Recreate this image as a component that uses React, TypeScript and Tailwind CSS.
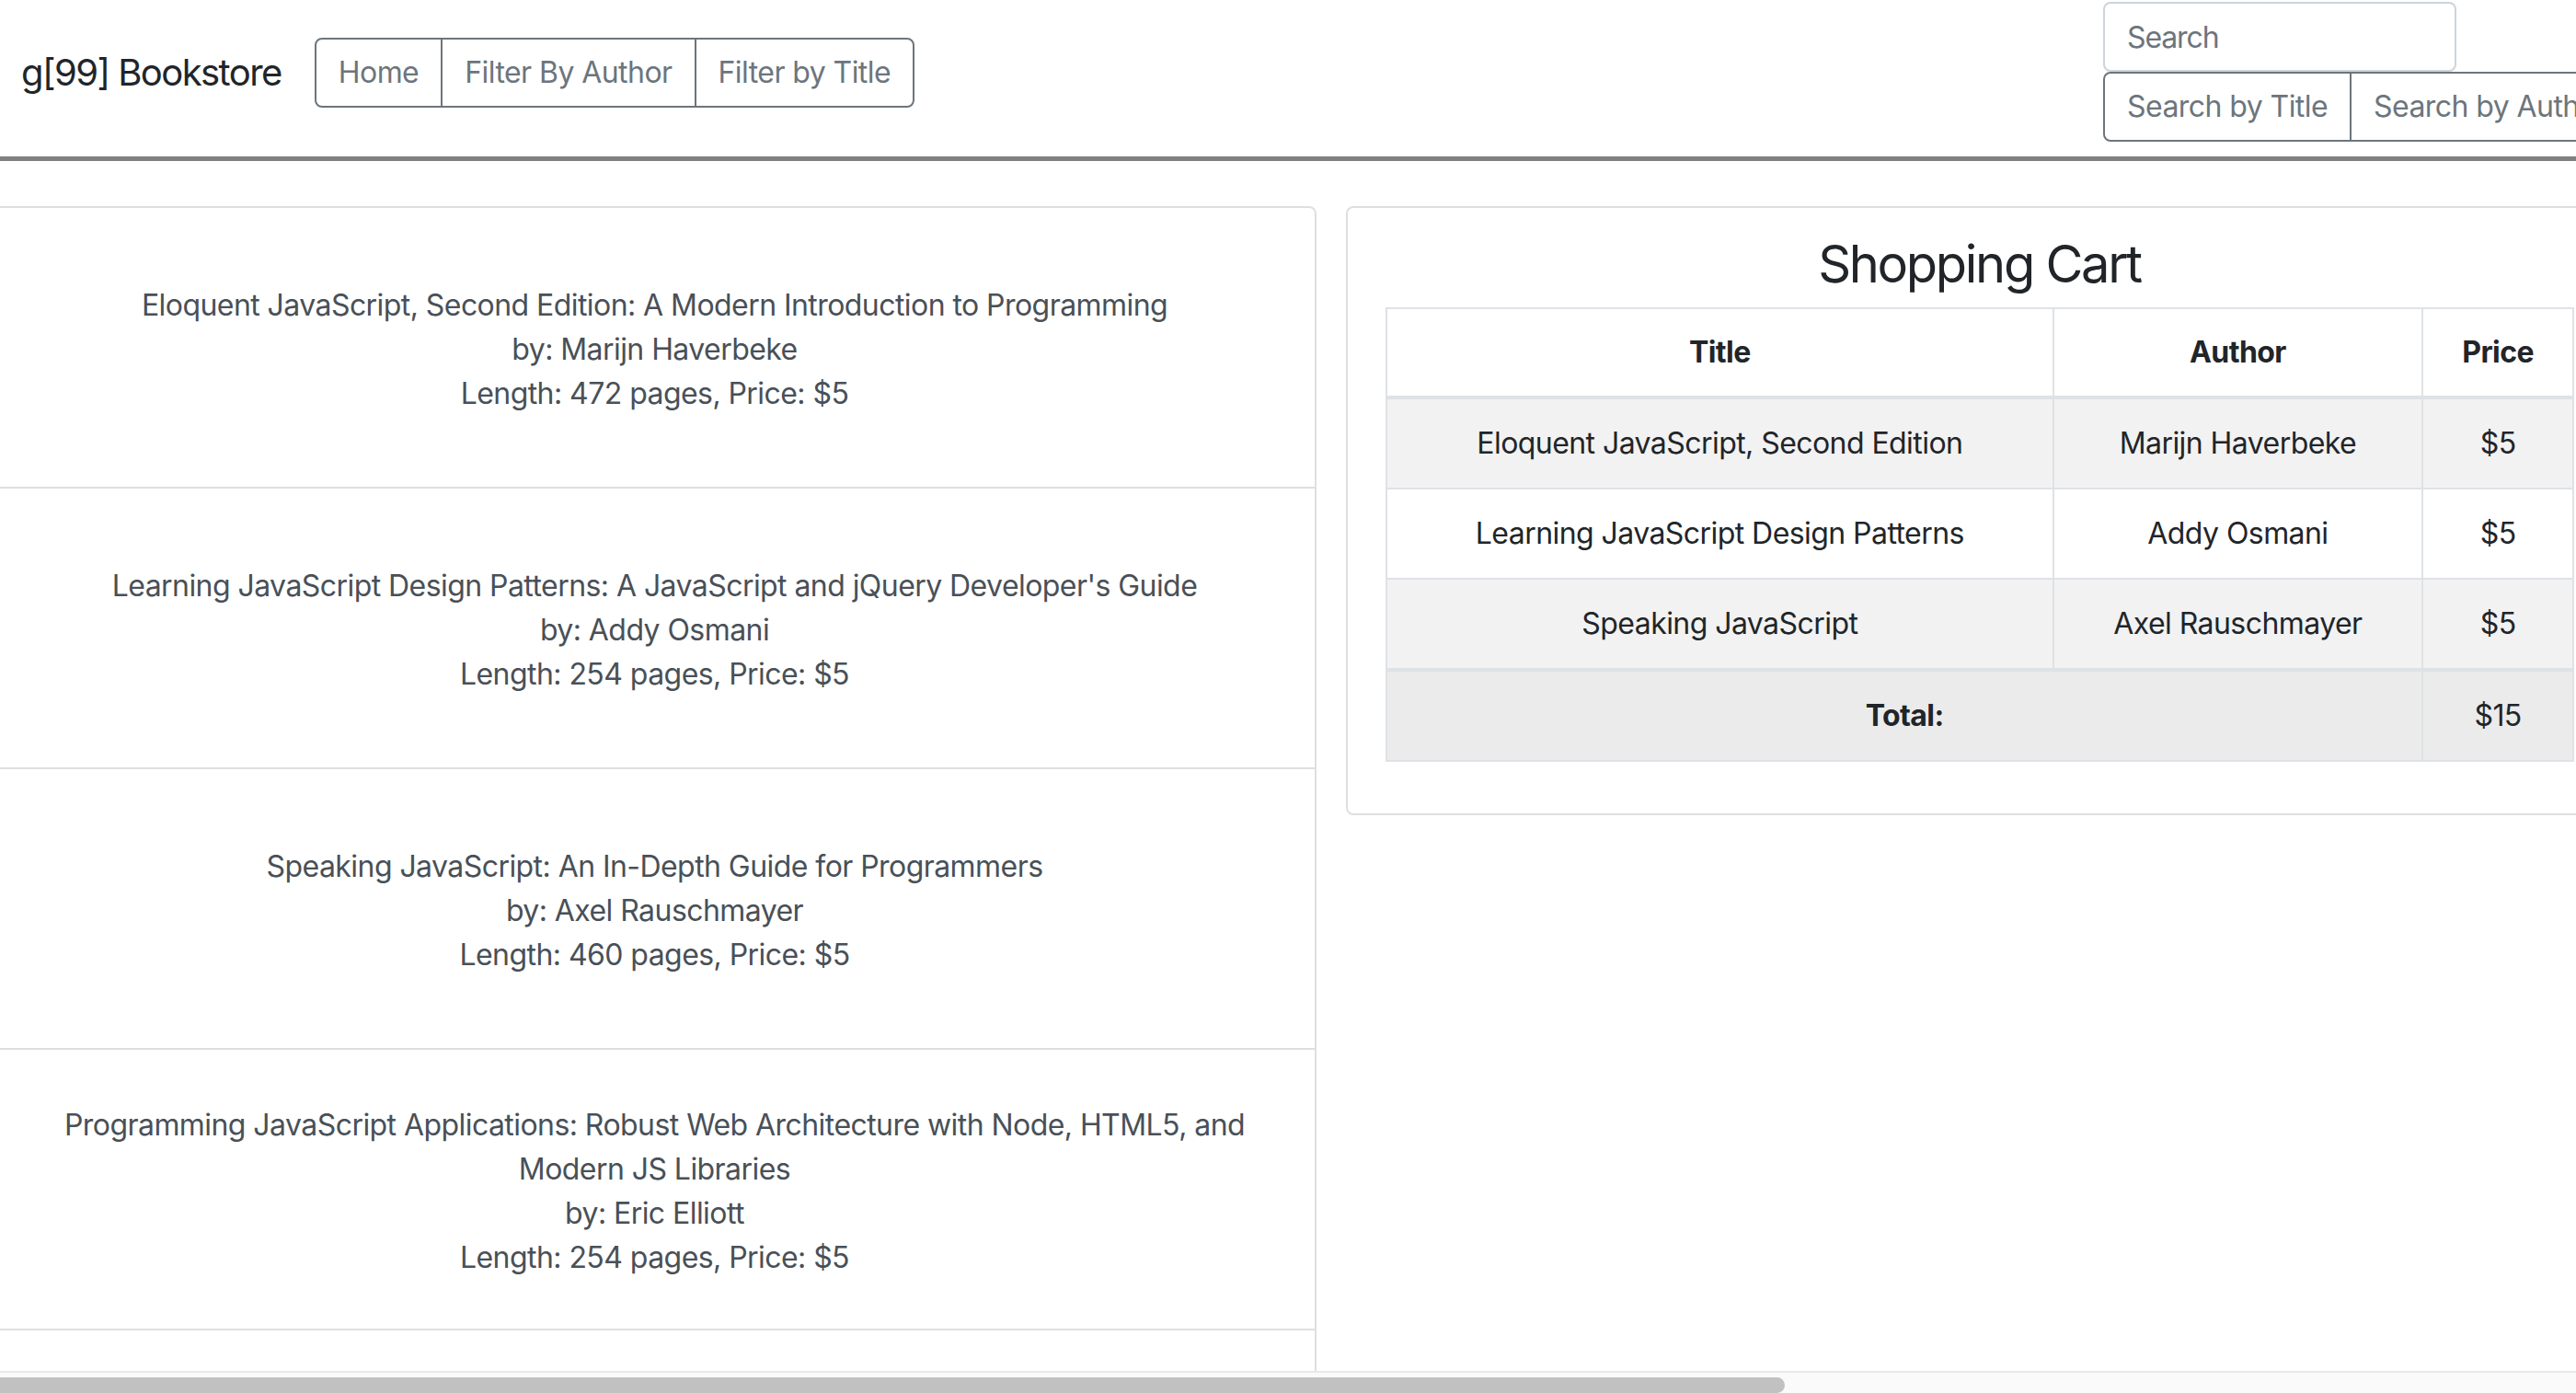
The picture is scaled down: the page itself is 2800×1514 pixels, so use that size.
import React from 'react'

const books = [
  {
    title: 'Eloquent JavaScript, Second Edition: A Modern Introduction to Programming',
    author: 'Marijn Haverbeke',
    pages: 472,
    price: 5,
  },
  {
    title: "Learning JavaScript Design Patterns: A JavaScript and jQuery Developer's Guide",
    author: 'Addy Osmani',
    pages: 254,
    price: 5,
  },
  {
    title: 'Speaking JavaScript: An In-Depth Guide for Programmers',
    author: 'Axel Rauschmayer',
    pages: 460,
    price: 5,
  },
  {
    title: 'Programming JavaScript Applications: Robust Web Architecture with Node, HTML5, and Modern JS Libraries',
    author: 'Eric Elliott',
    pages: 254,
    price: 5,
  },
  {
    title: "You Don't Know JS",
    author: 'Kyle Simpson',
    pages: 278,
    price: 5,
  },
]

const cart = [
  { title: 'Eloquent JavaScript, Second Edition', author: 'Marijn Haverbeke', price: 5 },
  { title: 'Learning JavaScript Design Patterns', author: 'Addy Osmani', price: 5 },
  { title: 'Speaking JavaScript', author: 'Axel Rauschmayer', price: 5 },
]

function NavBar() {
  return (
    <header className="flex h-[170px] shrink-0 items-start">
      <div className="ml-[23px] mt-[49px] shrink-0 text-[40px] leading-[60px] tracking-[-0.039em] text-[#212529]">
        g[99] Bookstore
      </div>
      <div className="ml-[36px] mt-[41px] flex h-[76px] shrink-0 rounded-[8px] border-2 border-[#6c757d] text-[32px] leading-[48px] text-[#6c757d]">
        <button className="px-[24px]">Home</button>
        <button className="border-l-2 border-[#6c757d] px-[24px]">Filter By Author</button>
        <button className="border-l-2 border-[#6c757d] px-[24px]">Filter by Title</button>
      </div>
      <div className="flex-1" />
      <div className="mt-[2px] w-[514px] shrink-0">
        <input
          placeholder="Search"
          className="block h-[76px] w-[384px] rounded-[8px] border-2 border-[#ced4da] px-[24px] text-[32px] tracking-[-0.035em] text-[#495057] outline-none placeholder:text-[#6c757d]"
        />
        <div className="flex h-[76px] w-max rounded-[8px] border-2 border-[#6c757d] text-[32px] leading-[48px] text-[#6c757d]">
          <button className="px-[24px]">Search by Title</button>
          <button className="border-l-2 border-[#6c757d] px-[24px]">Search by Author</button>
        </div>
      </div>
    </header>
  )
}

function BookList() {
  return (
    <div className="w-[1439px] shrink-0 self-start rounded-[8px] border-2 border-[#dfdfdf] bg-white">
      {books.map((b) => (
        <div
          key={b.title}
          className="flex h-[305px] flex-col items-center justify-center border-b-2 border-[#dfdfdf] px-[40px] pt-[4px] text-center text-[32px] leading-[48px] text-[#495057]"
        >
          <div>{b.title}</div>
          <div>by: {b.author}</div>
          <div>
            Length: {b.pages} pages, Price: ${b.price}
          </div>
        </div>
      ))}
    </div>
  )
}

function ShoppingCart() {
  const total = cart.reduce((s, c) => s + c.price, 0)
  return (
    <div className="w-[1377px] shrink-0 self-start rounded-[8px] border-2 border-[#dfdfdf] px-[41px] pb-[24px] pt-[28px]">
      <h3 className="mb-[13px] text-center text-[56px] leading-[67px] tracking-[-0.041em] text-[#212529]">
        Shopping Cart
      </h3>
      <table className="mb-[32px] w-[1292px] border-collapse text-center text-[32px] leading-[48px] text-[#212529]">
        <thead>
          <tr>
            <th className="w-[726px] border-2 border-b-4 border-[#dee2e6] py-[23px] font-bold">Title</th>
            <th className="w-[402px] border-2 border-b-4 border-[#dee2e6] py-[23px] font-bold">Author</th>
            <th className="w-[164px] border-2 border-b-4 border-[#dee2e6] py-[23px] font-bold">Price</th>
          </tr>
        </thead>
        <tbody>
          {cart.map((c, i) => (
            <tr key={c.title} className={i % 2 === 0 ? 'bg-[#f2f2f2]' : 'bg-white'}>
              <td className="border-2 border-[#dee2e6] py-[24px]">{c.title}</td>
              <td className="border-2 border-[#dee2e6] py-[24px]">{c.author}</td>
              <td className="border-2 border-[#dee2e6] py-[24px]">${c.price}</td>
            </tr>
          ))}
          <tr className="bg-[#ebebeb]">
            <td colSpan={2} className="border-2 border-t-4 border-[#dee2e6] py-[24px] font-bold">
              Total:
            </td>
            <td className="border-2 border-t-4 border-[#dee2e6] py-[24px]">${total}</td>
          </tr>
        </tbody>
      </table>
    </div>
  )
}

export default function App() {
  return (
    <div className="flex h-[1514px] w-[2800px] flex-col overflow-hidden bg-white font-['Inter',sans-serif] tracking-[-0.035em]">
      <NavBar />
      <div className="h-[5px] shrink-0 bg-[#808080]" />
      <main className="ml-[-8px] flex min-h-0 flex-1 gap-[32px] overflow-hidden pt-[49px]">
        <BookList />
        <ShoppingCart />
      </main>
      {/* fake horizontal scrollbar */}
      <div className="h-[24px] shrink-0 border-t-2 border-[#e8e8e8] bg-[#fafafa] pt-[5px]">
        <div className="h-[17px] w-[1940px] rounded-r-full bg-[#c1c1c1]" />
      </div>
    </div>
  )
}
